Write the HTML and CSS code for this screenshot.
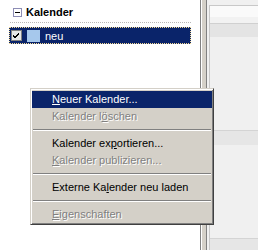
FILE: index.html
```html
<!DOCTYPE html>
<html lang="de">
<head>
    <meta charset="UTF-8">
    <title>Kalender</title>
    <link rel="stylesheet" href="styles.css">
</head>
<body>
    <div class="app">
        <div class="nav-pane">
            <div class="group-head">
                <span class="toggle"></span>
                <span class="group-title">Kalender</span>
            </div>
            <div class="cal-row selected">
                <span class="check">
                    <svg width="9" height="9" viewBox="0 0 9 9"><path d="M1 4 L3 6 L7 2 M1 5 L3 7 L7 3" stroke="#000" stroke-width="1" fill="none"/></svg>
                </span>
                <span class="swatch"></span>
                <span class="cal-name">neu</span>
            </div>
        </div>
        <div class="splitter"></div>
        <div class="view-pane">
            <div class="view-frame">
                <div class="band head-top"></div>
                <div class="band head-mid"></div>
                <div class="band head-row"></div>
                <div class="band plain gap-a"></div>
                <div class="band row"></div>
                <div class="band plain gap-b"></div>
                <div class="band row"></div>
            </div>
        </div>
    </div>

    <ul class="context-menu">
        <li class="item active"><u>N</u>euer Kalender...</li>
        <li class="item disabled">Kalender l<u>ö</u>schen</li>
        <li class="sep"></li>
        <li class="item">Kalender ex<u>p</u>ortieren...</li>
        <li class="item disabled"><u>K</u>alender publizieren...</li>
        <li class="sep"></li>
        <li class="item">Externe Ka<u>l</u>ender neu laden</li>
        <li class="sep"></li>
        <li class="item disabled"><u>E</u>igenschaften</li>
    </ul>
</body>
</html>
```

FILE: styles.css
```css
body {
    margin: 0;
    width: 258px;
    height: 250px;
    overflow: hidden;
    font-family: 'Liberation Sans', Arial, sans-serif;
    font-size: 11px;
    color: #000;
    background: #fff;
}
.app {
    display: flex;
    height: 250px;
}
.nav-pane {
    width: 200px;
    background: #fff;
}
.group-head {
    display: flex;
    align-items: center;
    gap: 4px;
    height: 16px;
    padding: 4px 0 2px 3px;
    margin: 0 9px 0 10px;
    border-bottom: 1px dotted #b8b8b8;
}
.toggle {
    position: relative;
    width: 9px;
    height: 9px;
    box-sizing: border-box;
    border: 1px solid #8d8db5;
    background: #fff;
}
.toggle::after {
    content: '';
    position: absolute;
    left: 1px;
    top: 3px;
    width: 5px;
    height: 1px;
    background: #000;
}
.group-title {
    font-weight: bold;
    font-size: 11px;
}
.cal-row {
    display: flex;
    align-items: center;
    height: 17px;
    box-sizing: border-box;
    margin: 4px 9px 0 9px;
    padding-left: 1px;
}
.cal-row.selected {
    background: #0a246a;
    color: #fff;
    border: 1px dotted #f5db95;
}
.check {
    display: flex;
    align-items: center;
    justify-content: center;
    width: 11px;
    height: 11px;
    box-sizing: border-box;
    border: 1px solid #808080;
    background: #e6e6e6;
}
.swatch {
    width: 13px;
    height: 12px;
    margin-left: 5px;
    background: #a6c8ec;
}
.cal-name {
    margin-left: 5px;
}
.splitter {
    width: 5px;
    background: #d4d0c8;
    border-left: 1px solid #808080;
    border-right: 1px solid #808080;
    box-shadow: inset 1px 0 0 #fff;
}
.view-pane {
    flex: 1;
    background: #f0f0f0;
    padding: 5px 0 0 2px;
}
.view-frame {
    border-top: 1px solid #c8c8c8;
    border-left: 1px solid #c8c8c8;
    height: 100%;
}
.band.head-top { height: 11px; background: #fafafa; }
.band.head-mid { height: 6px; background: #f2f2f2; }
.band.head-row { height: 13px; background: #e4e4e4; border-top: 1px solid #d0d0d0; }
.band.plain { background: #f0f0f0; }
.band.gap-a { height: 93px; }
.band.gap-b { height: 93px; }
.band.row { height: 14px; background: #e6e6e6; border-top: 1px solid #d4d4d4; }

.context-menu {
    position: absolute;
    left: 30px;
    top: 88px;
    width: 180px;
    margin: 0;
    padding: 2px 1px 1px 1px;
    list-style: none;
    background: #d4d0c8;
    border: 1px solid;
    border-color: #d4d0c8 #404040 #404040 #d4d0c8;
    box-shadow: inset 1px 1px 0 #fff, inset -1px -1px 0 #808080;
}
.item {
    height: 17px;
    line-height: 17px;
    padding-left: 20px;
    white-space: nowrap;
}
.item.active {
    background: #0a246a;
    color: #fff;
}
.item.disabled {
    color: #808080;
    text-shadow: 1px 1px 0 #fff;
}
.item u {
    text-underline-offset: 1px;
}
.sep {
    margin: 4px 1px;
    border-top: 1px solid #808080;
    border-bottom: 1px solid #fff;
}
```
